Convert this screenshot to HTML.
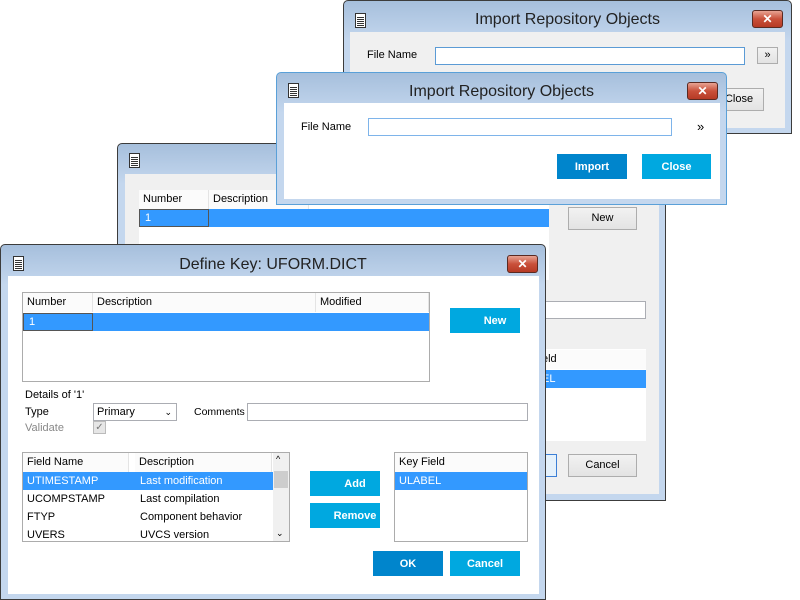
<!DOCTYPE html>
<html><head><style>
*{box-sizing:border-box;margin:0;padding:0}
body{width:800px;height:600px;background:#fff;position:relative;overflow:hidden;font-family:"Liberation Sans",sans-serif;font-size:11px;color:#000}
.a{position:absolute}
.win{position:absolute;border:1px solid #3c3c3c;border-radius:5px 5px 0 0;background:linear-gradient(#a6bfdc,#c4d7ee 40px);}
.title{position:absolute;left:0;right:0;text-align:center;font-size:16px;color:#222}
.cl{position:absolute;width:31px;height:18px;border:1px solid #5a2a22;border-radius:3px;background:linear-gradient(#e8a393,#c9503a 50%,#b63a25);color:#fff;font-weight:bold;font-size:12px;text-align:center;line-height:16px}
.ic{position:absolute;width:11px;height:15px;background:#fff;border:1px solid #333;background-image:repeating-linear-gradient(#fff 0 1px,#333 1px 2px);background-size:7px 10px;background-repeat:no-repeat;background-position:1px 2px}
.btn{position:absolute;color:#fff;font-weight:bold;font-size:11px;text-align:center}
.gb{position:absolute;border:1px solid #adadad;background:linear-gradient(#f2f2f2,#e3e3e3);text-align:center;font-size:11px}
.box{position:absolute;background:#fff;border:1px solid #acacac}
.hd{position:absolute;background:#fbfbfb;border-right:1px solid #e4e4e4;padding-left:4px}
.sel{position:absolute;background:#3399ff;color:#fff}
.inp{position:absolute;background:#fff;border:1px solid #abadb3}
</style></head><body>

<div class="win" style="left:343px;top:0;width:449px;height:134px">
 <div class="ic" style="left:11px;top:12px"></div>
 <div class="title" style="top:10px">Import Repository Objects</div>
 <div class="cl" style="left:408px;top:9px">✕</div>
 <div class="a" style="left:6px;top:31px;width:435px;height:96px;background:#f0f0f0"></div>
 <div class="a" style="left:23px;top:48px">File Name</div>
 <div class="inp" style="left:91px;top:46px;width:310px;height:18px;border-color:#5b9bd5"></div>
 <div class="gb" style="left:413px;top:46px;width:21px;height:17px;line-height:15px">»</div>
 <div class="gb" style="left:370px;top:87px;width:50px;height:23px;line-height:21px">Close</div>
</div>

<div class="win" style="left:117px;top:143px;width:549px;height:358px">
 <div class="ic" style="left:11px;top:9px"></div>
 <div class="a" style="left:7px;top:30px;width:534px;height:320px;background:#f0f0f0"></div>
 <div class="box" style="left:21px;top:46px;width:410px;height:90px;border:none"></div>
 <div class="hd" style="left:21px;top:46px;width:70px;height:19px;line-height:19px">Number</div>
 <div class="hd" style="left:91px;top:46px;width:100px;height:19px;line-height:19px">Description</div>
 <div class="sel" style="left:21px;top:65px;width:410px;height:18px"></div>
 <div class="a" style="left:21px;top:65px;width:70px;height:18px;border:1px solid #555;color:#fff;padding-left:5px;line-height:16px">1</div>
 <div class="gb" style="left:450px;top:63px;width:69px;height:23px;line-height:21px">New</div>
 <div class="inp" style="left:420px;top:157px;width:108px;height:18px"></div>
 <div class="box" style="left:420px;top:205px;width:108px;height:92px;border:none"></div>
 <div class="a" style="left:420px;top:206px;width:108px;height:19px;background:#fbfbfb;line-height:19px;padding-left:4px">eld</div>
 <div class="sel" style="left:420px;top:226px;width:108px;height:18px;line-height:18px;padding-left:4px">EL</div>
 <div class="a" style="left:420px;top:310px;width:19px;height:23px;border:1px solid #3c7fd6;background:#e5f1fb"></div>
 <div class="gb" style="left:450px;top:310px;width:69px;height:23px;line-height:21px">Cancel</div>
</div>

<div class="win" style="left:276px;top:72px;width:451px;height:133px;border-color:#5aa0d8">
 <div class="ic" style="left:11px;top:10px"></div>
 <div class="title" style="top:10px">Import Repository Objects</div>
 <div class="cl" style="left:410px;top:9px">✕</div>
 <div class="a" style="left:7px;top:30px;width:436px;height:96px;background:#fff"></div>
 <div class="a" style="left:24px;top:48px">File Name</div>
 <div class="inp" style="left:91px;top:45px;width:304px;height:18px;border-color:#7eb4ea"></div>
 <div class="a" style="left:420px;top:46px;font-size:13px">»</div>
 <div class="btn" style="left:280px;top:81px;width:70px;height:25px;line-height:26px;background:#0085cc">Import</div>
 <div class="btn" style="left:365px;top:81px;width:69px;height:25px;line-height:26px;background:#00a8e0">Close</div>
</div>

<div class="win" style="left:0;top:244px;width:546px;height:356px">
 <div class="ic" style="left:12px;top:11px"></div>
 <div class="title" style="top:11px">Define Key: UFORM.DICT</div>
 <div class="cl" style="left:506px;top:10px">✕</div>
 <div class="a" style="left:7px;top:31px;width:531px;height:318px;background:#fff"></div>
 <div class="box" style="left:21px;top:47px;width:408px;height:90px"></div>
 <div class="hd" style="left:22px;top:48px;width:70px;height:19px;line-height:19px">Number</div>
 <div class="hd" style="left:92px;top:48px;width:223px;height:19px;line-height:19px">Description</div>
 <div class="hd" style="left:315px;top:48px;width:113px;height:19px;line-height:19px">Modified</div>
 <div class="sel" style="left:22px;top:68px;width:406px;height:18px"></div>
 <div class="a" style="left:22px;top:68px;width:70px;height:18px;border:1px solid #555;color:#fff;padding-left:5px;line-height:16px">1</div>
 <div class="btn" style="left:449px;top:63px;width:70px;height:25px;line-height:26px;background:#00a8e0;padding-left:20px">New</div>
 <div class="a" style="left:24px;top:144px">Details of '1'</div>
 <div class="a" style="left:24px;top:161px">Type</div>
 <div class="inp" style="left:92px;top:158px;width:84px;height:18px;padding-left:3px;line-height:16px">Primary<span style="position:absolute;right:4px;top:0;font-size:9px">⌄</span></div>
 <div class="a" style="left:193px;top:161px;font-size:10.5px">Comments</div>
 <div class="inp" style="left:246px;top:158px;width:281px;height:18px"></div>
 <div class="a" style="left:24px;top:177px;color:#888">Validate</div>
 <div class="a" style="left:92px;top:176px;width:13px;height:13px;border:1px solid #bbb;background:#e6e6e6;color:#777;font-size:10px;line-height:11px;text-align:center">✓</div>
 <div class="box" style="left:21px;top:207px;width:268px;height:90px"></div>
 <div class="hd" style="left:22px;top:208px;width:106px;height:19px;line-height:19px">Field Name</div>
 <div class="hd" style="left:134px;top:208px;width:137px;height:19px;line-height:19px">Description</div>
 <div class="a" style="left:272px;top:208px;width:16px;height:88px;background:#f0f0f0"></div>
 <div class="a" style="left:273px;top:226px;width:14px;height:17px;background:#cdcdcd"></div>
 <div class="a" style="left:275px;top:209px;font-size:9px">^</div>
 <div class="a" style="left:275px;top:283px;font-size:9px">⌄</div>
 <div class="sel" style="left:22px;top:227px;width:250px;height:18px"></div>
 <div class="a" style="left:26px;top:230px;color:#fff">UTIMESTAMP</div>
 <div class="a" style="left:139px;top:230px;color:#fff">Last modification</div>
 <div class="a" style="left:26px;top:248px">UCOMPSTAMP</div><div class="a" style="left:139px;top:248px">Last compilation</div>
 <div class="a" style="left:26px;top:266px">FTYP</div><div class="a" style="left:139px;top:266px">Component behavior</div>
 <div class="a" style="left:26px;top:284px">UVERS</div><div class="a" style="left:139px;top:284px">UVCS version</div>
 <div class="btn" style="left:309px;top:226px;width:70px;height:25px;line-height:26px;background:#00a8e0;padding-left:20px">Add</div>
 <div class="btn" style="left:309px;top:258px;width:70px;height:25px;line-height:26px;background:#00a8e0;padding-left:20px">Remove</div>
 <div class="box" style="left:393px;top:207px;width:134px;height:90px"></div>
 <div class="hd" style="left:394px;top:208px;width:132px;height:19px;line-height:19px;border:none">Key Field</div>
 <div class="sel" style="left:394px;top:227px;width:132px;height:18px;line-height:18px;padding-left:4px">ULABEL</div>
 <div class="btn" style="left:372px;top:306px;width:70px;height:25px;line-height:26px;background:#0085cc">OK</div>
 <div class="btn" style="left:449px;top:306px;width:70px;height:25px;line-height:26px;background:#00a8e0">Cancel</div>
</div>
</body></html>
